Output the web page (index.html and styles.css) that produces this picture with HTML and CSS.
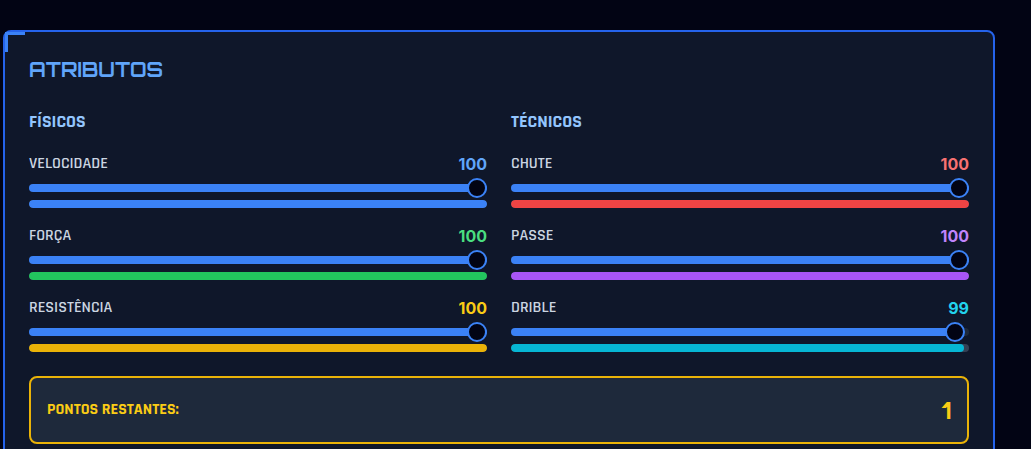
FILE: index.html
```html
<!DOCTYPE html>
<html lang="pt-BR">
<head>
<meta charset="utf-8">
<title>Atributos</title>
<link rel="stylesheet" href="styles.css">
</head>
<body>
<main class="page">
  <section class="panel">
    <h2 class="title">ATRIBUTOS</h2>
    <div class="columns">
      <div class="group">
        <h3 class="group-title">FÍSICOS</h3>
        <div class="attr blue">
          <div class="attr-head"><label for="velocidade">VELOCIDADE</label><output for="velocidade">100</output></div>
          <input class="slider" id="velocidade" type="range" min="0" max="100" value="100">
          <div class="bar"><div class="fill"></div></div>
        </div>
        <div class="attr green">
          <div class="attr-head"><label for="forca">FORÇA</label><output for="forca">100</output></div>
          <input class="slider" id="forca" type="range" min="0" max="100" value="100">
          <div class="bar"><div class="fill"></div></div>
        </div>
        <div class="attr yellow">
          <div class="attr-head"><label for="resistencia">RESISTÊNCIA</label><output for="resistencia">100</output></div>
          <input class="slider" id="resistencia" type="range" min="0" max="100" value="100">
          <div class="bar"><div class="fill"></div></div>
        </div>
      </div>
      <div class="group">
        <h3 class="group-title">TÉCNICOS</h3>
        <div class="attr red">
          <div class="attr-head"><label for="chute">CHUTE</label><output for="chute">100</output></div>
          <input class="slider" id="chute" type="range" min="0" max="100" value="100">
          <div class="bar"><div class="fill"></div></div>
        </div>
        <div class="attr purple">
          <div class="attr-head"><label for="passe">PASSE</label><output for="passe">100</output></div>
          <input class="slider" id="passe" type="range" min="0" max="100" value="100">
          <div class="bar"><div class="fill"></div></div>
        </div>
        <div class="attr cyan" style="--value: 99%">
          <div class="attr-head"><label for="drible">DRIBLE</label><output for="drible">99</output></div>
          <input class="slider" id="drible" type="range" min="0" max="100" value="99">
          <div class="bar"><div class="fill"></div></div>
        </div>
      </div>
    </div>
    <div class="points">
      <span class="points-label">PONTOS RESTANTES:</span>
      <span class="points-value">1</span>
    </div>
  </section>
</main>
</body>
</html>
```
FILE: styles.css
```css
*,
*::before {
  box-sizing: border-box;
  margin: 0;
}

body {
  background: #020414;
  color: #cbd5e1;
  font-family: Rajdhani, Roboto, "Liberation Sans", sans-serif;
  font-size: 16px;
  line-height: 24px;
}

.page {
  height: 100vh;
  overflow: hidden;
  padding: 30px 36px 0 3px;
}

.panel {
  position: relative;
  padding: 24px 24px 40px;
  background: #0f172a;
  border: 2px solid #2563eb;
  border-radius: 8px;
}

.panel::before {
  content: "";
  position: absolute;
  top: 0;
  left: 0;
  width: 20px;
  height: 20px;
  border-top: 3px solid #3b82f6;
  border-left: 3px solid #3b82f6;
}

.title {
  margin-bottom: 24px;
  color: #60a5fa;
  font-family: Orbitron, Inter, sans-serif;
  font-size: 20px;
  font-weight: 700;
  line-height: 28px;
}

.columns {
  display: grid;
  grid-template-columns: 1fr 1fr;
  gap: 24px;
}

.group {
  display: flex;
  flex-direction: column;
  gap: 16px;
}

.group-title {
  color: #93c5fd;
  font-size: 18px;
  font-weight: 700;
  line-height: 28px;
}

.attr {
  --value: 100%;
}

.attr-head {
  display: flex;
  justify-content: space-between;
  align-items: flex-start;
}

.attr-head label {
  font-weight: 600;
}

.attr-head output {
  color: var(--number);
  font-family: Inter, sans-serif;
  font-size: 16px;
  font-weight: 700;
}

.slider {
  display: block;
  width: 100%;
  height: 8px;
  margin: 8px 0;
  appearance: none;
  border-radius: 4px;
  background: linear-gradient(to right, #3b82f6 var(--value), #1e293b var(--value));
}

.slider::-webkit-slider-thumb {
  appearance: none;
  width: 20px;
  height: 20px;
  border: 2px solid #3b82f6;
  border-radius: 50%;
  background: #020414;
}

.bar {
  height: 8px;
  overflow: hidden;
  border-radius: 4px;
  background: #334155;
}

.fill {
  width: var(--value);
  height: 100%;
  border-radius: 4px;
  background: var(--color);
}

.blue { --number: #60a5fa; --color: #3b82f6; }
.green { --number: #4ade80; --color: #22c55e; }
.yellow { --number: #facc15; --color: #eab308; }
.red { --number: #f87171; --color: #ef4444; }
.purple { --number: #c084fc; --color: #a855f7; }
.cyan { --number: #22d3ee; --color: #06b6d4; }

.points {
  display: flex;
  justify-content: space-between;
  align-items: center;
  margin-top: 24px;
  padding: 16px;
  background: #1e293b;
  border: 2px solid #eab308;
  border-radius: 8px;
  color: #facc15;
  font-weight: 700;
}

.points-value {
  font-family: Orbitron, Inter, sans-serif;
  font-size: 24px;
  line-height: 32px;
}
```
